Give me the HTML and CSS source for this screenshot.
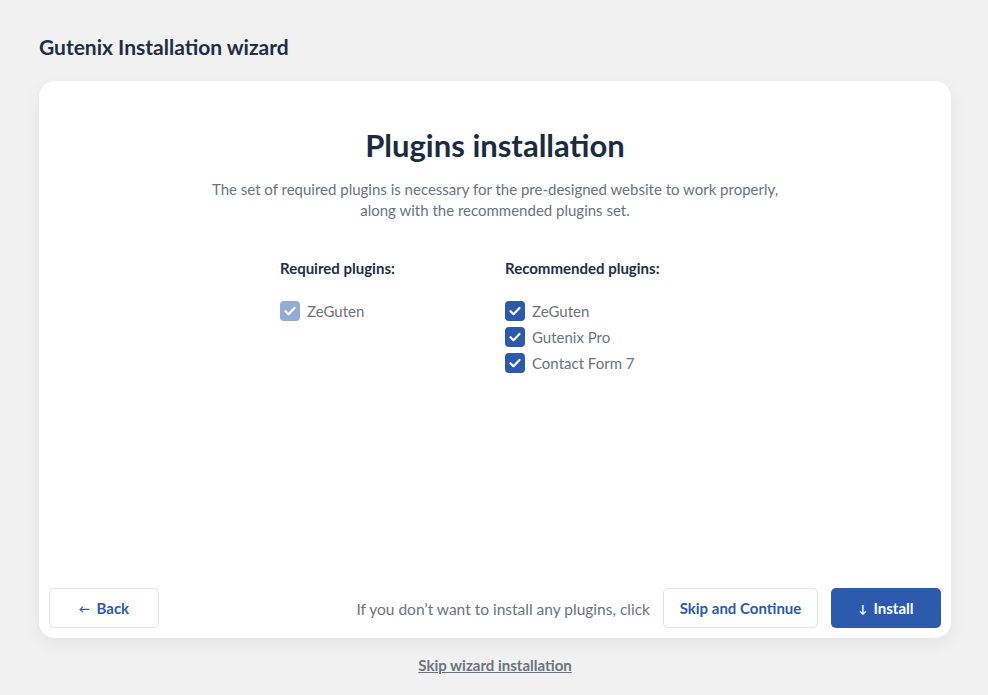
FILE: index.html
```html
<!DOCTYPE html>
<html lang="en">
<head>
    <meta charset="UTF-8">
    <meta name="viewport" content="width=device-width, initial-scale=1.0">
    <title>Gutenix Installation wizard</title>
    <link rel="stylesheet" href="styles.css">
</head>
<body>
    <div class="wizard">
        <h1 class="wizard-title">Gutenix Installation wizard</h1>

        <div class="card">
            <div class="card-body">
                <h2 class="card-title">Plugins installation</h2>
                <p class="card-desc">The set of required plugins is necessary for the pre-designed website to work properly,<br>along with the recommended plugins set.</p>

                <div class="plugin-columns">
                    <div class="plugin-group">
                        <h3>Required plugins:</h3>
                        <label class="plugin disabled">
                            <span class="check"><svg viewBox="0 0 20 20"><path d="M5.5 10.2l3 3 6-6.2"/></svg></span>
                            ZeGuten
                        </label>
                    </div>
                    <div class="plugin-group">
                        <h3>Recommended plugins:</h3>
                        <label class="plugin">
                            <span class="check"><svg viewBox="0 0 20 20"><path d="M5.5 10.2l3 3 6-6.2"/></svg></span>
                            ZeGuten
                        </label>
                        <label class="plugin">
                            <span class="check"><svg viewBox="0 0 20 20"><path d="M5.5 10.2l3 3 6-6.2"/></svg></span>
                            Gutenix Pro
                        </label>
                        <label class="plugin">
                            <span class="check"><svg viewBox="0 0 20 20"><path d="M5.5 10.2l3 3 6-6.2"/></svg></span>
                            Contact Form 7
                        </label>
                    </div>
                </div>
            </div>

            <div class="card-footer">
                <button class="btn btn-outline"><span class="arrow">&larr;</span> Back</button>
                <div class="footer-right">
                    <span class="skip-note">If you don’t want to install any plugins, click</span>
                    <button class="btn btn-outline">Skip and Continue</button>
                    <button class="btn btn-primary"><span class="arrow">&darr;</span> Install</button>
                </div>
            </div>
        </div>

        <div class="skip-wizard"><a href="#">Skip wizard installation</a></div>
    </div>
</body>
</html>
```

FILE: styles.css
```css
* {
    margin: 0;
    padding: 0;
    box-sizing: border-box;
}

body {
    font-family: Lato, "Liberation Sans", sans-serif;
    background: #f1f1f1;
    color: #1b2b41;
}

.wizard {
    width: 912px;
    margin: 0 0 0 39px;
    padding-top: 33px;
}

.wizard-title {
    font-size: 21px;
    font-weight: 700;
    line-height: 27px;
    color: #1d2e46;
    margin-bottom: 21px;
}

.card {
    background: #fff;
    border-radius: 16px;
    height: 557px;
    display: flex;
    flex-direction: column;
    box-shadow: 0 6px 18px rgba(0, 0, 0, 0.06);
}

.card-body {
    flex: 1;
    padding-top: 45px;
    text-align: center;
}

.card-title {
    font-size: 31px;
    font-weight: 700;
    line-height: 38px;
    color: #1a2b42;
    margin-bottom: 15px;
}

.card-desc {
    font-size: 15px;
    line-height: 21px;
    color: #6c7280;
}

.plugin-columns {
    display: flex;
    margin: 37px 0 0 241px;
    text-align: left;
}

.plugin-group {
    width: 225px;
}

.plugin-group h3 {
    font-size: 15px;
    font-weight: 700;
    line-height: 20px;
    color: #1d2e46;
    margin-bottom: 20px;
}

.plugin {
    display: flex;
    align-items: center;
    height: 26px;
    font-size: 15px;
    color: #6c7280;
}

.check {
    width: 20px;
    height: 20px;
    border-radius: 4px;
    background: #2c5aa8;
    margin-right: 7px;
    display: flex;
}

.check svg {
    width: 20px;
    height: 20px;
    fill: none;
    stroke: #fff;
    stroke-width: 2.2;
    stroke-linecap: round;
    stroke-linejoin: round;
}

.plugin.disabled .check {
    background: #95abd6;
}

.card-footer {
    display: flex;
    justify-content: space-between;
    align-items: center;
    padding: 0 10px 10px;
}

.footer-right {
    display: flex;
    align-items: center;
}

.btn {
    height: 40px;
    border-radius: 5px;
    font-family: inherit;
    font-size: 15px;
    font-weight: 700;
    cursor: pointer;
}

.btn-outline {
    background: #fff;
    border: 1px solid #dfe2e8;
    color: #2c5aa8;
}

.btn-outline:first-child {
    width: 110px;
}

.footer-right .btn-outline {
    width: 155px;
    margin-right: 13px;
}

.btn-primary {
    width: 110px;
    border: none;
    background: #2c5aad;
    color: #fff;
}

.arrow {
    font-size: 11px;
    margin-right: 3px;
    vertical-align: 1px;
}

.skip-note {
    font-size: 15.5px;
    color: #6c7280;
    margin-right: 13px;
    padding-top: 2px;
}

.skip-wizard {
    text-align: center;
    margin-top: 17px;
}

.skip-wizard a {
    font-size: 15px;
    font-weight: 700;
    color: #6c7280;
}
```
